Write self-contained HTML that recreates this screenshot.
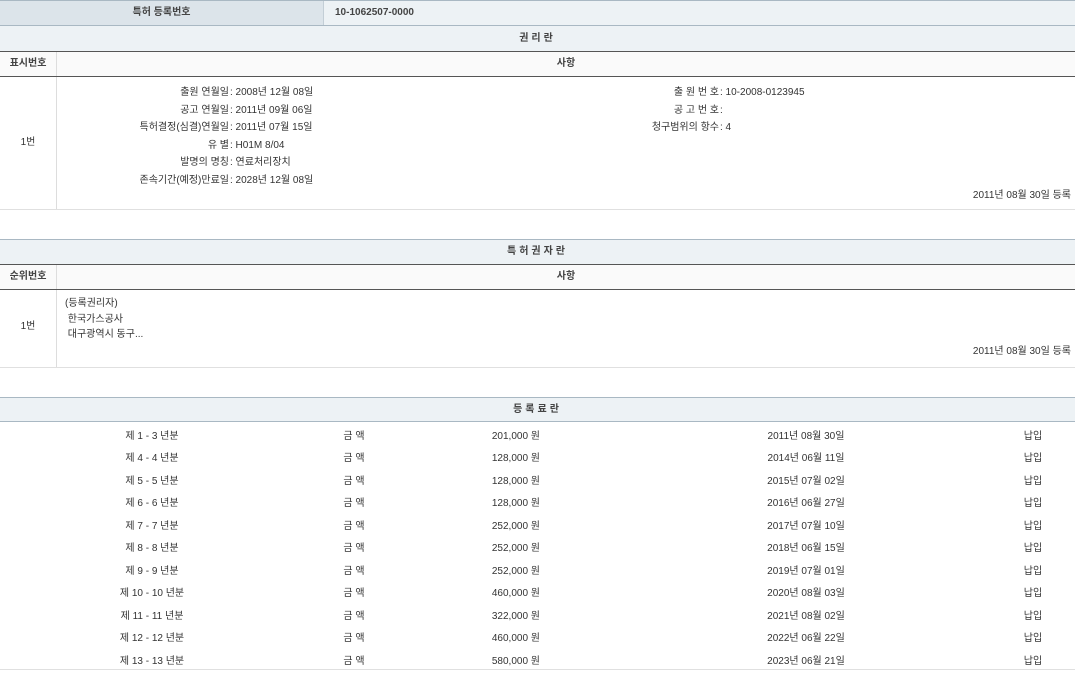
<!DOCTYPE html>
<html><head><meta charset="utf-8"><style>
body{margin:0;width:1075px;height:675px;background:#fff;font-family:"Liberation Sans","Noto Sans CJK KR",sans-serif;font-size:10px;color:#333;position:relative;overflow:hidden}
.a{position:absolute;white-space:nowrap;line-height:14px}
.b{position:absolute;left:0;width:1075px}
.c{text-align:center}
.r{text-align:right}
.h{font-weight:bold;color:#444}
</style></head><body>
<!-- top row -->
<div class="b" style="top:0;height:1px;background:#a9b8c3"></div>
<div class="a" style="left:0;top:1;top:1px;width:323px;height:24px;background:#dce4ea"></div>
<div class="a" style="left:323px;top:1px;width:1px;height:24px;background:#c3ced6"></div>
<div class="a" style="left:324px;top:1px;width:751px;height:24px;background:#edf2f5"></div>
<div class="a c h" style="left:0;top:6px;width:323px">특허 등록번호</div>
<div class="a h" style="left:335px;top:6px">10-1062507-0000</div>
<div class="b" style="top:25px;height:1px;background:#a9b8c3"></div>
<!-- 권리란 -->
<div class="b" style="top:26px;height:25px;background:#edf2f5"></div>
<div class="a c h" style="left:0;top:32px;width:1075px;letter-spacing:3px">권리란</div>
<div class="b" style="top:51px;height:1px;background:#555"></div>
<div class="b" style="top:52px;height:24px;background:#fafafa"></div>
<div class="a" style="left:56px;top:52px;width:1px;height:157px;background:#ddd"></div>
<div class="a c h" style="left:0;top:57px;width:56px">표시번호</div>
<div class="a c h" style="left:57px;top:57px;width:1018px">사항</div>
<div class="b" style="top:76px;height:1px;background:#555"></div>
<div class="a c" style="left:0;top:136px;width:56px">1번</div>
<div class="a r h" style="left:0;top:84px;width:229px;line-height:17.6px;font-weight:normal;color:#333">출원 연월일<br>공고 연월일<br>특허결정(심결)연월일<br>유 별<br>발명의 명칭<br>존속기간(예정)만료일</div>
<div class="a" style="left:230px;top:84px;line-height:17.6px">: 2008년 12월 08일<br>: 2011년 09월 06일<br>: 2011년 07월 15일<br>: H01M 8/04<br>: 연료처리장치<br>: 2028년 12월 08일</div>
<div class="a r" style="left:500px;top:84px;width:219px;line-height:17.6px">출 원 번 호<br>공 고 번 호<br>청구범위의 항수</div>
<div class="a" style="left:720px;top:84px;line-height:17.6px">: 10-2008-0123945<br>:<br>: 4</div>
<div class="a r" style="left:800px;top:189px;width:271px">2011년 08월 30일 등록</div>
<div class="b" style="top:209px;height:1px;background:#e0e0e0"></div>
<!-- 특허권자란 -->
<div class="b" style="top:239px;height:1px;background:#a9b8c3"></div>
<div class="b" style="top:240px;height:24px;background:#edf2f5"></div>
<div class="a c h" style="left:0;top:245px;width:1075px;letter-spacing:3px">특허권자란</div>
<div class="b" style="top:264px;height:1px;background:#555"></div>
<div class="b" style="top:265px;height:24px;background:#fafafa"></div>
<div class="a" style="left:56px;top:265px;width:1px;height:102px;background:#ddd"></div>
<div class="a c h" style="left:0;top:270px;width:56px">순위번호</div>
<div class="a c h" style="left:57px;top:270px;width:1018px">사항</div>
<div class="b" style="top:289px;height:1px;background:#555"></div>
<div class="a c" style="left:0;top:320px;width:56px">1번</div>
<div class="a" style="left:65px;top:296px;line-height:15.5px">(등록권리자)<br>&nbsp;한국가스공사<br>&nbsp;대구광역시 동구...</div>
<div class="a r" style="left:800px;top:345px;width:271px">2011년 08월 30일 등록</div>
<div class="b" style="top:367px;height:1px;background:#e0e0e0"></div>
<!-- 등록료란 -->
<div class="b" style="top:397px;height:1px;background:#a9b8c3"></div>
<div class="b" style="top:398px;height:23px;background:#edf2f5"></div>
<div class="a c h" style="left:0;top:403px;width:1075px;letter-spacing:3px">등록료란</div>
<div class="b" style="top:421px;height:1px;background:#a9b8c3"></div>
<div class="a c" style="left:52px;top:426px;width:200px;line-height:22.45px">제 1 - 3 년분<br>제 4 - 4 년분<br>제 5 - 5 년분<br>제 6 - 6 년분<br>제 7 - 7 년분<br>제 8 - 8 년분<br>제 9 - 9 년분<br>제 10 - 10 년분<br>제 11 - 11 년분<br>제 12 - 12 년분<br>제 13 - 13 년분</div>
<div class="a c" style="left:304px;top:426px;width:100px;line-height:22.45px">금 액<br>금 액<br>금 액<br>금 액<br>금 액<br>금 액<br>금 액<br>금 액<br>금 액<br>금 액<br>금 액</div>
<div class="a r" style="left:400px;top:426px;width:140px;line-height:22.45px">201,000 원<br>128,000 원<br>128,000 원<br>128,000 원<br>252,000 원<br>252,000 원<br>252,000 원<br>460,000 원<br>322,000 원<br>460,000 원<br>580,000 원</div>
<div class="a c" style="left:706px;top:426px;width:200px;line-height:22.45px">2011년 08월 30일<br>2014년 06월 11일<br>2015년 07월 02일<br>2016년 06월 27일<br>2017년 07월 10일<br>2018년 06월 15일<br>2019년 07월 01일<br>2020년 08월 03일<br>2021년 08월 02일<br>2022년 06월 22일<br>2023년 06월 21일</div>
<div class="a c" style="left:993px;top:426px;width:80px;line-height:22.45px">납입<br>납입<br>납입<br>납입<br>납입<br>납입<br>납입<br>납입<br>납입<br>납입<br>납입</div>
<div class="b" style="top:669px;height:1px;background:#e0e0e0"></div>
</body></html>
